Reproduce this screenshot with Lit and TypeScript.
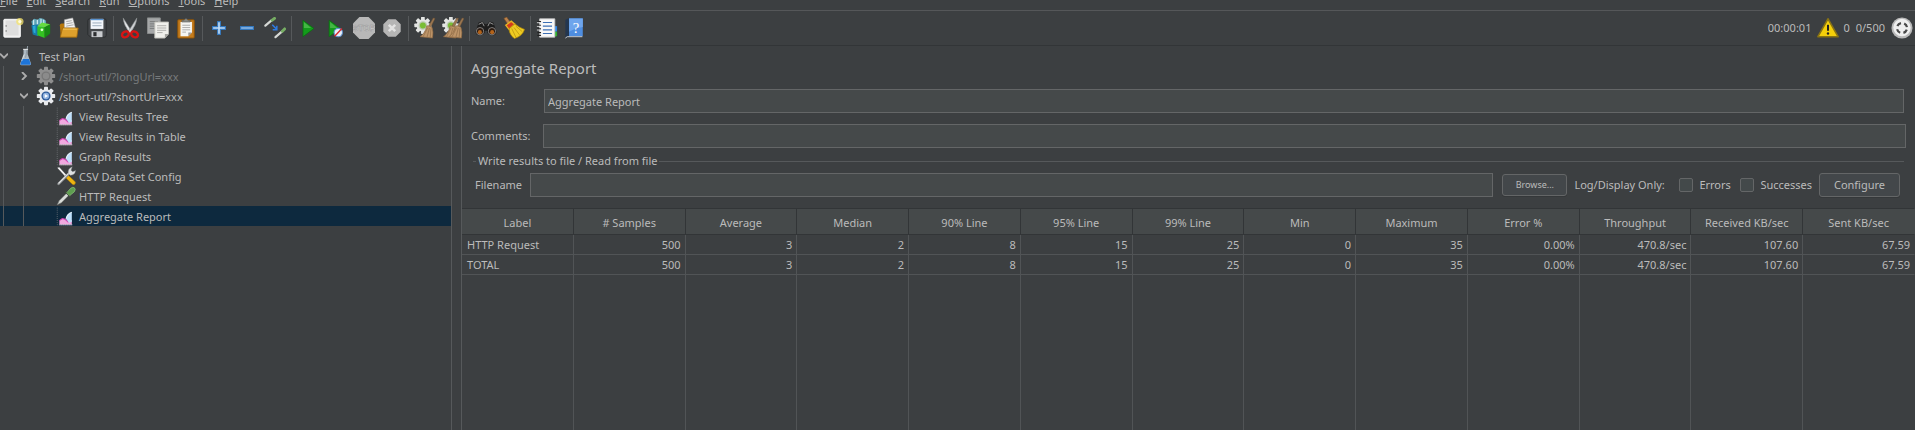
import { LitElement, html, svg, css, nothing } from "lit";
import { customElement, property, state } from "lit/decorators.js";
import { classMap } from "lit/directives/class-map.js";

const gear = (body: string, hub: string, core: string) => svg`
  <g fill=${body}>
    <circle cx="12" cy="12" r="8"/>
    ${[0, 45, 90, 135].map((a) => svg`<rect x="9.6" y="1" width="4.8" height="22" rx="1" transform="rotate(${a} 12 12)"/>`)}
  </g>
  <circle cx="12" cy="12" r="5.500" fill=${hub}/>
  <circle cx="12" cy="12" r="3.800" fill=${core}/>`;

const pipette = svg`
  <path d="M1.500 22.500l2.500-5 9-9 2.500 2.500-9 9z" fill="#d8dbd8" stroke="#7c807c" stroke-width=".7"/>
  <path d="M11 6.500l6.500 6.500" stroke="#3d4a3a" stroke-width="2"/>
  <path d="M13 8l4.500-5.200q3-2.300 4.800-.5t-.5 4.800L16.500 11.500z" fill="#5e9e50" stroke="#8fc77f" stroke-width=".8"/>`;

const broom = svg`
  <path d="M21 1l2 .6-4.500 9-2.500-1z" fill="#9a7650" stroke="#6a4f35" stroke-width=".5"/>
  <path d="M14 9.500l5.500 1.500q2 5 .7 12L6.500 21.500q6-4 7.500-12z" fill="#bd9468" stroke="#8a6540" stroke-width=".7"/>
  <path d="M15 11.500L10 21.500M16.800 12l-2.600 10M18.500 12.500l-.8 10" stroke="#8a6744" stroke-width=".7" fill="none"/>`;

const chart = svg`
  <path d="M1.500 2v20.500H19" fill="none" stroke="#777b7e" stroke-width="1" stroke-dasharray="1 1.500"/>
  <path d="M4 22v-4.500l3.500-2.500 3.500 1 4 3 4-2.500V22z" fill="#f0a9e0"/>
  <path d="M4 17.500L7.500 15l3.500 1 4 3.500" fill="none" stroke="#d23bb0" stroke-width="1.300"/>
  <path d="M12 15.500q1.500-6.500 7-8v11.500l-3.500 1z" fill="#bfe0fb"/>
  <path d="M12 15.500q1.500-6.500 7-8" fill="none" stroke="#e9f5ff" stroke-width="1.300"/>
  <path d="M4 22.500h15.500" stroke="#f7dbf1" stroke-width="1"/>`;

const icons: Record<string, unknown> = {
  new: svg`
    <rect x="2" y="2.500" width="18" height="19.500" rx="1" fill="#ececec" stroke="#fff"/>
    <path d="M4 4h14v16H4z" fill="#dedede"/>
    <path d="M4.500 9v1.500M4.500 14.500V16" stroke="#555"/>
    <circle cx="19.500" cy="5" r="4" fill="#f4e36c" opacity=".75"/><circle cx="19.500" cy="5" r="1.800" fill="#fffce0"/>`,
  templates: svg`
    <path d="M1.500 5l3-3 4 1 2-2 4 1 3 2v6l-6 3-7 7-1-7z" fill="#5ba3b5"/>
    <path d="M4 3v7M8 3v7M12 2v6M15 3v5" stroke="#d9f1f6" stroke-width="1.200"/>
    <path d="M1.500 9L9 8v13l-6-2z" fill="#1878a8"/><path d="M3 10l3-1v9l-2-1z" fill="#2aa9d6"/>
    <path d="M8 10l8 1v12l-8-3z" fill="#34c321"/><path d="M16 11l6-3v10l-6 5z" fill="#168a12"/>
    <path d="M8 10l5-4 9 2-6 3z" fill="#66dd3f"/><circle cx="13" cy="14" r="1.500" fill="#d9ffd0"/>`,
  open: svg`
    <path d="M2 9q0-2 2-2h4v14H3z" fill="#b9780a"/>
    <path d="M7 3l9-2 3 11H7z" fill="#f2f2f2" stroke="#aaa" stroke-width=".6"/>
    <path d="M9 5l6-1M9 7.500l7-1.300M9 10l8-1.500" stroke="#999" stroke-width=".9"/>
    <path d="M2.500 22L5 12h17l-1.500 10z" fill="#dda02c" stroke="#a36a0b" stroke-width=".9"/>
    <path d="M5.500 13.200h15" stroke="#f5ca63"/>`,
  save: svg`
    <path d="M2 4q0-2 2-2h16q2 0 2 2v16q0 2-2 2H5l-3-3z" fill="#45484b" stroke="#292b2d"/>
    <path d="M5 2h14v11H5z" fill="#f3f6fb"/><path d="M5 2h14v1.500H5z" fill="#5a93d0"/>
    <path d="M7 6.500h10M7 9.500h10" stroke="#96a6b8"/>
    <path d="M6 15.500h12V22H6z" fill="#c8cbce"/><path d="M8 16.500h3.500V21H8z" fill="#2c2e30"/>`,
  cut: svg`
    <path d="M4.500 1l9.500 15-2 1.500Q5 9 4.500 1z" fill="#e4e6e8" stroke="#898d90" stroke-width=".6"/>
    <path d="M19.500 1L10 16l2 1.500Q19 9 19.500 1z" fill="#cfd2d4" stroke="#898d90" stroke-width=".6"/>
    <ellipse cx="7" cy="19" rx="3.900" ry="3" fill="none" stroke="#d81414" stroke-width="2.600" transform="rotate(-30 7 19)"/>
    <ellipse cx="17" cy="19" rx="3.900" ry="3" fill="none" stroke="#d81414" stroke-width="2.600" transform="rotate(30 17 19)"/>`,
  copy: svg`
    <path d="M.5 1h14v17H.5z" fill="#a5a7a8" stroke="#8a8c8d"/>
    <path d="M3 5h9M3 7.500h9M3 10h9M3 12.500h9" stroke="#77797a"/>
    <path d="M8.500 5.500h15v13l-4 4.500h-11z" fill="#f0f0ec" stroke="#bdbdb8"/>
    <path d="M11 9.500h10M11 12h10M11 14.500h10M11 17h6" stroke="#a9a9a5"/><path d="M19.500 23v-4.500h4z" fill="#a4a4a0"/>`,
  paste: svg`
    <rect x="3" y="3" width="18" height="20" rx="1" fill="#c47c1d" stroke="#8d5206"/>
    <path d="M6 5.500h12.500v11.500l-4 4H6z" fill="#f5f5f2"/>
    <path d="M8 9h8.500M8 11.500h8.500M8 14h8.500M8 16.500h4" stroke="#aaa"/>
    <path d="M7.500 5.500V3.500h2.500q2-3.500 4 0h2.500v2z" fill="#8b8d88" stroke="#555" stroke-width=".6"/><path d="M14.500 21v-4h4z" fill="#999"/>`,
  plus: svg`<path d="M10.500 5h3v5.500H19v3h-5.500V19h-3v-5.500H5v-3h5.500z" fill="#c2ddf7" stroke="#3277be" stroke-width="1.200"/>`,
  minus: svg`<path d="M5 10.500h14v3H5z" fill="#8fb9e4" stroke="#3277be" stroke-width="1.200"/>`,
  toggle: svg`
    <path d="M1.500 9.500l7-6" stroke="#d5d8d5" stroke-width="2.400" stroke-linecap="round"/><path d="M9 3.500l2.500-2" stroke="#76ad63" stroke-width="3.200" stroke-linecap="round"/>
    <path d="M12.500 22l7-6" stroke="#d5d8d5" stroke-width="2.400" stroke-linecap="round"/><path d="M20 15.500l2.500-2.500" stroke="#76ad63" stroke-width="3.200" stroke-linecap="round"/>
    <path d="M9 8.500l5 5M14 9.500V14H9.500" stroke="#2f7be0" stroke-width="1.600" fill="none"/>`,
  start: svg`<path d="M6.500 3.500L18.500 12.500 6.500 21.500z" fill="#139c1b" stroke="#0c6a12" stroke-width=".8"/><path d="M7.500 5.500l8 6.500h-8z" fill="#45b545"/>`,
  startNoTimers: svg`
    <path d="M4.500 3.500L16.500 12.500 4.500 21.500z" fill="#139c1b" stroke="#0c6a12" stroke-width=".8"/><path d="M5.500 5.500l8 6.500h-8z" fill="#45b545"/>
    <circle cx="14.500" cy="17" r="4.600" fill="#e8f0fa" stroke="#5f8fca" stroke-width="1.200"/><path d="M10.500 21l8-8.500" stroke="#d9262b" stroke-width="1.500"/>`,
  stop: svg`
    <path d="M7 0h10l7 7v10l-7 7H7l-7-7V7z" fill="#b8b8b8"/>
    <text class="stop" x="12" y="15.500" text-anchor="middle">STOP</text>`,
  shutdown: svg`
    <path d="M8 2.500h8L21.500 8v8L16 21.500H8L2.500 16V8z" fill="#b5b5b5"/>
    <path d="M8.500 8.500l7 7M15.500 8.500l-7 7" stroke="#e2e2e2" stroke-width="2.800"/>`,
  clear: svg`<g transform="translate(-.5 -1) scale(.85)">${gear("#e3e5e3", "#b9c9ad", "#79bd35")}</g>${broom}`,
  clearAll: svg`<g transform="translate(-.5 -1) scale(.85)">${gear("#e3e5e3", "#b9c9ad", "#79bd35")}</g><g transform="translate(-5 0)">${broom}</g><g transform="translate(1 0)">${broom}</g>`,
  search: svg`
    <path d="M4 6l4-1 3 3h2l3-3 4 1 3.500 10q0 4-5 4T13 15h-2q-.5 5-5.500 5t-5-4z" fill="#1d1d1d"/>
    <path d="M4 8l4-2 2 4M20 8l-4-2-2 4" stroke="#a0a0a0" fill="none"/>
    <circle cx="5.500" cy="15.500" r="4" fill="#2b1a10" stroke="#888"/><circle cx="18.500" cy="15.500" r="4" fill="#2b1a10" stroke="#888"/>
    <circle cx="5.300" cy="16.500" r="2.200" fill="#b4641b"/><circle cx="18.700" cy="16.500" r="2.200" fill="#b4641b"/>`,
  reset: svg`
    <path d="M1 1.500L4 0l5 7-3 2z" fill="#b9824e" stroke="#7c4f24" stroke-width=".7"/>
    <path d="M3 9l6-4.500 4 3.500-6.500 5.500z" fill="#d33c1e" stroke="#e7b322" stroke-width="1.500"/>
    <path d="M6.500 13l6.500-5.500q5.500 4.500 10.500 6-2 7-11 10-5.500-4-6-10.500z" fill="#eecb22" stroke="#a8820a" stroke-width=".8"/>
    <path d="M9.500 12.500l4.500 9.500M12 11.500l6 8M14 10l7 6" stroke="#b8900c" fill="none" stroke-width=".8"/>`,
  functions: svg`
    <path d="M20 10h3v6h-3z" fill="#2f87e8"/><path d="M20 16h3v5h-3z" fill="#2fb02d"/>
    <path d="M4 2h16.500v20H4z" fill="#f8f8f8" stroke="#c9c9c9"/>
    <path d="M7.500 6h10M7.500 10h10M7.500 14h10M7.500 18h10" stroke="#3c6fb4" stroke-width="1.200"/>
    <path d="M1.500 5h4M1.500 9h4M1.500 13h4M1.500 17h4M1.500 20h4" stroke="#222" stroke-width="1.200"/><path d="M1 6.200h4M1 10.200h4M1 14.200h4" stroke="#eee" stroke-width=".9"/>`,
  help: svg`
    <path d="M1.500 3l3-1.500h15V22h-16l-2 1z" fill="#23364f"/><path d="M5.500 1.500h15V21h-15z" fill="#4e8de0"/>
    <path d="M5.500 1.500h15V11q-8 1-15 5z" fill="#6ea5ec"/><path d="M1.500 23l2-1.500H20" stroke="#ddd" fill="none"/>
    <text class="mark" x="13" y="17.500" text-anchor="middle">?</text>`,
  warning: svg`
    <path d="M12 2L23 21.500H1z" fill="#f5cf0a" stroke="#8a7413" stroke-width="1.800" stroke-linejoin="round"/>
    <path d="M12 8.500v6.500" stroke="#222" stroke-width="2.200"/><circle cx="12" cy="18" r="1.300" fill="#222"/>`,
  remote: svg`
    <circle cx="12" cy="12" r="11.500" fill="#b9b9b9"/><circle cx="12" cy="11.500" r="9.500" fill="#efefef"/>
    <circle cx="12" cy="12" r="5.500" fill="none" stroke="#4a4a4a" stroke-width="2.400" stroke-dasharray="5 3.640" stroke-dashoffset="-1.820"/>`,
  plan: svg`
    <path d="M9 4h5v6l4 11q.5 2-1.500 2h-10q-2 0-1.500-2L9 10z" fill="#b9c6d0" opacity=".9"/>
    <path d="M7.300 15.500h8.500l1.800 6q.3 1-1.100 1h-10q-1.400 0-1.100-1z" fill="#1d74d8"/>
    <path d="M14 0l-2.500 14" stroke="#8f9aa3" stroke-width="1.200"/><path d="M8.500 4h6" stroke="#fff"/><path d="M10 10l-3 8" stroke="#fff" opacity=".6"/>`,
  gearOff: gear("#8e8e8e", "#777", "#8b8b8b"),
  gearOn: svg`${gear("#e9ebee", "#2e5b9a", "#8fb2df")}<path d="M10.500 9.500l4 2.500-4 2.500z" fill="#fff"/>`,
  chart,
  config: svg`
    <path d="M1.500 2l2.500-.5L14 12.500 12.500 14z" fill="#f2f2f2"/>
    <path d="M12.500 13l2.500-1.500 8 7.500q1 1.500-.5 2.800t-2.800.2L12.500 15z" fill="#eeb410" stroke="#a97a06" stroke-width=".6"/>
    <path d="M3 21.500L16 8.500" stroke="#8b8e90" stroke-width="3" stroke-linecap="round"/>
    <path d="M3 21L16 8" stroke="#e2e4e5" stroke-width="1.300"/>
    <path d="M15 9q-1.500-5.500 4.500-8L18 5l2 2 3.500-1.500q-1 6-6.500 5.500z" fill="#dfe1e2" stroke="#8b8e90" stroke-width=".5"/>`,
  sampler: pipette,
  down: svg`<path d="M0 5l12 12L24 5" fill="none" stroke="#adadad" stroke-width="5.500"/>`,
  right: svg`<path d="M6 0l12 12L6 24" fill="none" stroke="#adadad" stroke-width="5.500"/>`,
};

const icon = (name: string) => html`<svg viewBox="0 0 24 24" aria-hidden="true">${icons[name]}</svg>`;

const base = css`
  * { box-sizing: border-box; }
  button, input { font: inherit; color: inherit; margin: 0; }
  svg { display: block; }
`;

@customElement("menu-bar")
class MenuBar extends LitElement {
  static styles = [base, css`
    :host { display: block; overflow: hidden; height: 11px; border-bottom: 1px solid #555759; }
    .menus { display: flex; align-items: flex-end; gap: 9px; height: 10px; }
    .menu { background: none; border: 0; padding: 0; height: 18px; line-height: 18px; }
    .menu::first-letter { text-decoration: underline; }
  `];
  render() {
    return html`<nav class="menus">
      ${["File", "Edit", "Search", "Run", "Options", "Tools", "Help"].map((m) => html`<button class="menu">${m}</button>`)}
    </nav>`;
  }
}

const TOOLS: [string, string][][] = [
  [["new", "New"], ["templates", "Templates"], ["open", "Open"], ["save", "Save"]],
  [["cut", "Cut"], ["copy", "Copy"], ["paste", "Paste"]],
  [["plus", "Expand all"], ["minus", "Collapse all"], ["toggle", "Toggle"]],
  [["start", "Start"], ["startNoTimers", "Start no pauses"], ["stop", "Stop"], ["shutdown", "Shutdown"]],
  [["clear", "Clear"], ["clearAll", "Clear all"]],
  [["search", "Search"], ["reset", "Reset search"]],
  [["functions", "Function helper"], ["help", "Help"]],
];

@customElement("tool-bar")
class ToolBar extends LitElement {
  static styles = [base, css`
    :host { display: flex; justify-content: space-between; align-items: center; height: 35px; border-bottom: 1px solid #323537; }
    .groups { display: flex; margin-left: -1px; }
    .group { display: flex; align-items: center; }
    .group + .group::before { content: ""; width: 1px; height: 25px; margin: 0 2px; background: #56595b; }
    .tool { background: none; border: 0; padding: 0; width: 28px; height: 28px; display: grid; place-items: center; }
    .tool svg, .status svg { width: 22px; height: 22px; }
    .status { display: flex; align-items: center; gap: 6px; padding-right: 2px; }
    .warn { display: flex; align-items: center; gap: 4px; background: none; border: 0; padding: 0; }
    .stop { font: 700 9px "Liberation Sans", sans-serif; fill: #d2d2d2; stroke: #949494; stroke-width: .5; }
    .mark { font: 16px "Liberation Serif", serif; fill: #fff; }
  `];
  render() {
    return html`
      <div class="groups">
        ${TOOLS.map((g) => html`<div class="group">
          ${g.map(([name, label]) => html`<button class="tool" aria-label=${label}
            ?disabled=${name === "stop" || name === "shutdown"}>${icon(name)}</button>`)}
        </div>`)}
      </div>
      <div class="status">
        <span>00:00:01</span>
        <button class="warn" aria-label="Errors logged: 0">${icon("warning")}<span>0</span></button>
        <span>0/500</span>
        ${icon("remote")}
      </div>`;
  }
}

interface Node { label: string; icon: string; depth: number; twist?: string; off?: boolean; }

const NODES: Node[] = [
  { label: "Test Plan", icon: "plan", depth: 0, twist: "down" },
  { label: "/short-utl/?longUrl=xxx", icon: "gearOff", depth: 1, twist: "right", off: true },
  { label: "/short-utl/?shortUrl=xxx", icon: "gearOn", depth: 1, twist: "down" },
  { label: "View Results Tree", icon: "chart", depth: 2 },
  { label: "View Results in Table", icon: "chart", depth: 2 },
  { label: "Graph Results", icon: "chart", depth: 2 },
  { label: "CSV Data Set Config", icon: "config", depth: 2 },
  { label: "HTTP Request", icon: "sampler", depth: 2 },
  { label: "Aggregate Report", icon: "chart", depth: 2 },
];

@customElement("plan-tree")
class PlanTree extends LitElement {
  @state() private selected = 8;
  static styles = [base, css`
    :host { display: block; }
    .tree { list-style: none; margin: 0; padding: 0; }
    .row { display: flex; align-items: center; height: 20px; line-height: 18px; white-space: nowrap; }
    .label { padding-top: 2px; }
    .row.selected { background: #0d293e; }
    .row.off { color: #777a7b; }
    .guide { width: 20px; height: 20px; flex: none; padding-left: 3px; }
    .guide.line::before { content: ""; display: block; width: 1px; height: 20px; background: #56595b; }
    .twist { width: 8px; height: 8px; flex: none; background: none; border: 0; padding: 0; }
    .twist svg { width: 8px; height: 8px; }
    .icon { width: 20px; flex: none; margin: 0 3px 0 8px; }
    .depth2 .icon { margin-left: 16px; }
  `];
  render() {
    return html`<ul class="tree" role="tree">
      ${NODES.map((n, i) => html`
        <li role="treeitem" aria-selected=${i === this.selected} @click=${() => (this.selected = i)}
          class=${classMap({ row: true, selected: i === this.selected, off: !!n.off, [`depth${n.depth}`]: true })}>
          ${n.depth > 0 ? html`<span class="guide line"></span>` : nothing}
          ${n.depth > 1 ? html`<span class="guide line"></span>` : nothing}
          ${n.twist ? html`<button class="twist" aria-label="Toggle ${n.label}">${icon(n.twist)}</button>` : nothing}
          <span class="icon">${icon(n.icon)}</span><span class="label">${n.label}</span>
        </li>`)}
    </ul>`;
  }
}

const COLUMNS = ["Label", "# Samples", "Average", "Median", "90% Line", "95% Line", "99% Line", "Min",
  "Maximum", "Error %", "Throughput", "Received KB/sec", "Sent KB/sec"];
const ROWS = ["HTTP Request", "TOTAL"].map((label) =>
  [label, "500", "3", "2", "8", "15", "25", "0", "35", "0.00%", "470.8/sec", "107.60", "67.59"]);

@customElement("results-table")
class ResultsTable extends LitElement {
  @property({ attribute: false }) rows: string[][] = ROWS;
  static styles = [base, css`
    :host { display: grid; }
    .table { width: 100%; height: 100%; table-layout: fixed; border-collapse: separate; border-spacing: 0; }
    .head { height: 27px; padding: 2px 0 0; font-weight: 400; background: #45494a; border: solid #323537; border-width: 1px 1px 1px 0; }
    .cell { height: 20px; padding: 0 4px; line-height: 19px; text-align: right; border: solid #515456; border-width: 0 1px 1px 0; }
    .cell:first-child { text-align: left; padding-left: 5px; }
    .rest { padding: 0; border-right: 1px solid #515456; }
    .head:last-child, .cell:last-child, .rest:last-child { border-right-color: transparent; }
  `];
  render() {
    return html`<table class="table">
      <thead><tr>${COLUMNS.map((c) => html`<th class="head" scope="col">${c}</th>`)}</tr></thead>
      <tbody>
        ${this.rows.map((r) => html`<tr>${r.map((v) => html`<td class="cell">${v}</td>`)}</tr>`)}
        <tr aria-hidden="true">${COLUMNS.map(() => html`<td class="rest"></td>`)}</tr>
      </tbody>
    </table>`;
  }
}

@customElement("report-panel")
class ReportPanel extends LitElement {
  static styles = [base, css`
    :host { display: flex; flex-direction: column; border-left: 1px solid #56595b; }
    .title { margin: 0; padding: 10px 9px 9px; font-size: 15px; line-height: 24px; font-weight: 400; }
    .field { display: flex; align-items: center; margin: 0 9px 4px 9px; }
    .name { margin: 0 11px 11px 9px; }
    .field label { width: 72px; flex: none; }
    .name label { width: 73px; }
    .text { flex: 1; min-width: 0; height: 24px; padding: 0 3px; background: #45494a; border: 1px solid #646667; outline: 0; }
    .file { margin: 0 11px 0 11px; padding: 0; border: 0; border-top: 1px solid #56595b; min-width: 0; }
    .legend { margin-left: 3px; padding: 0 2px; line-height: 18px; }
    .line { display: flex; align-items: center; padding: 3px 4px 11px 2px; }
    .line label { flex: none; }
    .file-label { width: 55px; }
    .button { background: #43474a; border: 1px solid #646667; border-radius: 3px; box-shadow: 0 1px 0 #35383a; padding: 0; text-align: center; flex: none; }
    .browse { width: 65px; height: 22px; margin: 0 7px 0 9px; font-size: 9px; }
    .configure { width: 81px; height: 24px; margin-left: 7px; }
    .check { display: flex; align-items: center; gap: 6px; }
    .box { appearance: none; width: 14px; height: 14px; background: #43494a; border: 1px solid #646667; border-radius: 2px; }
    .only { width: 105px; }
    .errors { width: 61px; }
    .table { flex: 1; }
  `];
  render() {
    return html`
      <h1 class="title">Aggregate Report</h1>
      <div class="field name"><label for="name">Name:</label><input class="text" id="name" .value=${"Aggregate Report"}></div>
      <div class="field"><label for="comments">Comments:</label><input class="text" id="comments"></div>
      <fieldset class="file">
        <legend class="legend">Write results to file / Read from file</legend>
        <div class="line">
          <label class="file-label" for="file">Filename</label><input class="text" id="file">
          <button class="button browse">Browse...</button>
          <span class="only">Log/Display Only:</span>
          <label class="check errors"><input class="box" type="checkbox">Errors</label>
          <label class="check"><input class="box" type="checkbox">Successes</label>
          <button class="button configure">Configure</button>
        </div>
      </fieldset>
      <results-table class="table"></results-table>`;
  }
}

@customElement("app-root")
class AppRoot extends LitElement {
  static styles = [base, css`
    :host { display: flex; flex-direction: column; min-height: 100vh; background: #3c3f41; color: #bbbbbb;
      font: 11px/16px "Noto Sans", "Open Sans", sans-serif; }
    .body { flex: 1; display: grid; grid-template-columns: minmax(0, 451px) 10px minmax(0, 1fr); }
    .divider { border-left: 1px solid #56595b; }
  `];
  render() {
    return html`
      <menu-bar></menu-bar>
      <tool-bar></tool-bar>
      <div class="body">
        <plan-tree></plan-tree>
        <div class="divider"></div>
        <report-panel></report-panel>
      </div>`;
  }
}
